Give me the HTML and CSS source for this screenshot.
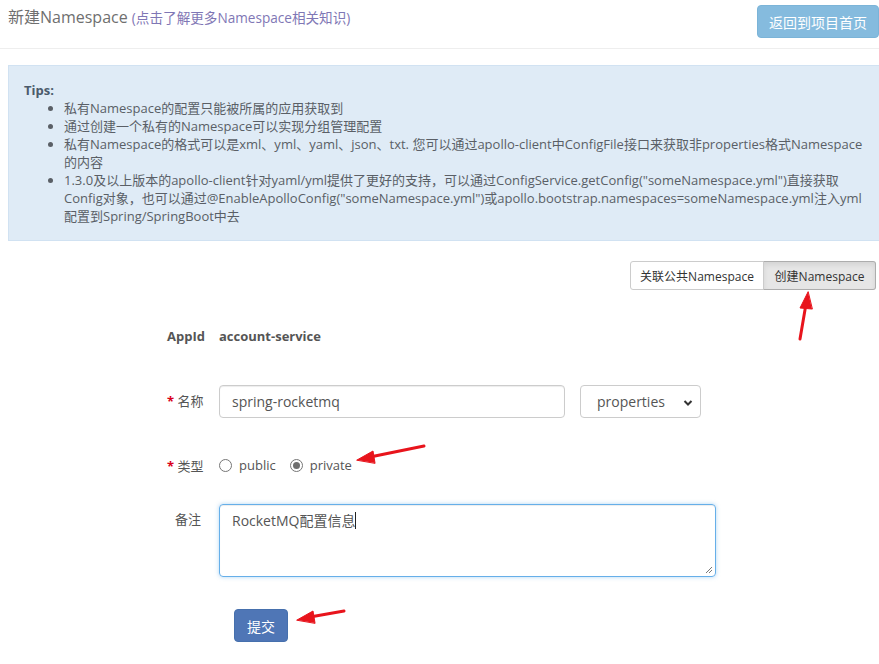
FILE: index.html
```html
<!DOCTYPE html>
<html lang="zh">
<head>
<meta charset="utf-8">
<title>新建Namespace</title>
<link rel="stylesheet" href="styles.css">
</head>
<body>
<div class="page">
  <header class="header">
    <h1 class="title">新建Namespace <a class="help" href="#">(点击了解更多Namespace相关知识)</a></h1>
    <button class="btn-back" type="button">返回到项目首页</button>
  </header>

  <div class="alert">
    <div class="tips-title">Tips:</div>
    <ul class="tips">
      <li>私有Namespace的配置只能被所属的应用获取到</li>
      <li>通过创建一个私有的Namespace可以实现分组管理配置</li>
      <li>私有Namespace的格式可以是xml、yml、yaml、json、txt. 您可以通过apollo-client中ConfigFile接口来获取非properties格式Namespace的内容</li>
      <li>1.3.0及以上版本的apollo-client针对yaml/yml提供了更好的支持，可以通过ConfigService.getConfig("someNamespace.yml")直接获取Config对象，也可以通过@EnableApolloConfig("someNamespace.yml")或apollo.bootstrap.namespaces=someNamespace.yml注入yml配置到Spring/SpringBoot中去</li>
    </ul>
  </div>

  <div class="segment-bar">
    <div class="segment">
      <button class="seg-btn" type="button">关联公共Namespace</button>
      <button class="seg-btn active" type="button">创建Namespace</button>
    </div>
  </div>

  <form class="form">
    <div class="row row-appid">
      <label class="label bold">AppId</label>
      <div class="value bold">account-service</div>
    </div>
    <div class="row row-name">
      <label class="label"><span class="req">*</span> 名称</label>
      <div class="value inline">
        <input class="input" type="text" value="spring-rocketmq">
        <div class="select">properties
          <svg class="chev" width="10" height="8" viewBox="0 0 10 8"><path d="M1.5 2 L5 5.5 L8.5 2" fill="none" stroke="#333" stroke-width="2"/></svg>
        </div>
      </div>
    </div>
    <div class="row row-type">
      <label class="label"><span class="req">*</span> 类型</label>
      <div class="value inline radios">
        <span class="radio"><span class="dot"></span>public</span>
        <span class="radio checked"><span class="dot"></span>private</span>
      </div>
    </div>
    <div class="row row-remark">
      <label class="label top">备注</label>
      <div class="value">
        <div class="textarea">RocketMQ配置信息<span class="caret"></span>
          <svg class="grip" width="9" height="9" viewBox="0 0 9 9"><path d="M8 2 L2 8 M8 5 L5 8" stroke="#777" stroke-width="1"/></svg>
        </div>
      </div>
    </div>
    <div class="row row-submit">
      <div class="label"></div>
      <div class="value"><button class="btn-submit" type="button">提交</button></div>
    </div>
  </form>

  <svg class="arrows" width="879" height="664" viewBox="0 0 879 664">
    <g fill="#e8141c" stroke="#e8141c" stroke-linecap="round">
      <path d="M800 339 L806 304" stroke-width="3" fill="none"/>
      <path d="M808 292 L800 308 L812 309 Z" stroke-width="1"/>
      <path d="M424 446 L370 457" stroke-width="3" fill="none"/>
      <path d="M357 460 L373 451 L375 463 Z" stroke-width="1"/>
      <path d="M344 611 L310 617" stroke-width="3" fill="none"/>
      <path d="M297 620 L313 611 L315 623 Z" stroke-width="1"/>
    </g>
  </svg>
</div>
</body>
</html>
```

FILE: styles.css
```css
* { box-sizing: border-box; }
html, body { margin: 0; padding: 0; background: #fff; }
body {
  font-family: "Open Sans", "Noto Sans CJK SC", sans-serif;
  font-size: 13px;
  color: #555;
  width: 879px;
  height: 664px;
  overflow: hidden;
}
.page { position: relative; width: 879px; height: 664px; }

.header {
  height: 49px;
  border-bottom: 1px solid #eee;
  display: flex;
  justify-content: space-between;
  align-items: flex-start;
  padding-left: 8px;
}
.title {
  margin: 6px 0 0;
  font-size: 16px;
  font-weight: 400;
  color: #6f6f6f;
  line-height: 22px;
}
.help {
  font-size: 13.6px;
  color: #7f77b5;
  text-decoration: none;
}
.btn-back {
  margin-top: 5px;
  width: 122px;
  height: 33px;
  border: 1px solid #7bb4d8;
  border-radius: 4px;
  background: #85bbde;
  color: #fff;
  font-family: "Open Sans", "Noto Sans CJK SC", sans-serif;
  font-size: 14px;
  padding: 0;
}

.alert {
  margin: 16px 0 0 8px;
  height: 176px;
  background: #dfebf6;
  border: 1px solid #d1e2f2;
  border-right: 0;
  padding: 15px 15px 0 15px;
  line-height: 18px;
  color: #5a5f66;
}
.tips-title {
  font-weight: 700;
  color: #4b5a6b;
}
.tips {
  margin: 0;
  padding-left: 40px;
}
.tips li { margin: 0; }

.segment-bar {
  display: flex;
  justify-content: flex-end;
  margin-top: 20px;
  padding-right: 3px;
}
.segment { display: flex; }
.seg-btn {
  height: 29px;
  border: 1px solid #ccc;
  background: #fff;
  font-family: "Open Sans", "Noto Sans CJK SC", sans-serif;
  font-size: 12px;
  color: #333;
  padding: 0 9px;
}
.seg-btn:first-child { border-radius: 3px 0 0 3px; width: 134px; }
.seg-btn.active {
  background: #e6e6e6;
  border-color: #adadad;
  border-left-color: #ccc;
  border-radius: 0 3px 3px 0;
  margin-left: -1px;
  width: 113px;
  box-shadow: inset 0 3px 5px rgba(0,0,0,0.08);
}

.form { display: flex; flex-direction: column; }
.row { display: flex; align-items: center; }
.label {
  width: 204px;
  flex: none;
  padding-left: 167px;
  margin-right: 15px;
  white-space: nowrap;
  color: #555;
  font-size: 13px;
}
.row-remark .label { padding-left: 175px; }
.bold { font-weight: 700; }
.req { color: #d9001b; font-weight: 700; }
.row-appid { margin-top: 29px; height: 34px; }
.row-name { margin-top: 32px; height: 33px; }
.row-name .label { padding-bottom: 3px; }
.row-type { margin-top: 30px; height: 34px; }
.row-remark { margin-top: 22px; align-items: flex-start; }
.row-remark .label { padding-top: 5px; }
.row-submit { margin-top: 32px; }

.inline { display: flex; align-items: center; }
.input {
  width: 346px;
  height: 33px;
  border: 1px solid #ccc;
  border-radius: 4px;
  padding: 0 12px;
  font-family: "Open Sans", "Noto Sans CJK SC", sans-serif;
  font-size: 14px;
  color: #555;
  box-shadow: inset 0 1px 1px rgba(0,0,0,0.075);
}
.select {
  margin-left: 15px;
  width: 121px;
  height: 33px;
  border: 1px solid #ccc;
  border-radius: 4px;
  font-size: 14px;
  color: #555;
  display: flex;
  align-items: center;
  padding-left: 16px;
  position: relative;
}
.chev { position: absolute; right: 7px; top: 13px; }

.radios { gap: 0; }
.radio {
  display: inline-flex;
  align-items: center;
  font-size: 13px;
  color: #555;
  margin-right: 14px;
}
.dot {
  width: 13px;
  height: 13px;
  border: 1px solid #767676;
  border-radius: 50%;
  margin-right: 7px;
  background: #fff;
  position: relative;
}
.checked .dot::after {
  content: "";
  position: absolute;
  left: 2px; top: 2px;
  width: 7px; height: 7px;
  border-radius: 50%;
  background: #6f6f6f;
}

.textarea {
  position: relative;
  width: 497px;
  height: 73px;
  border: 1px solid #66afe9;
  border-radius: 4px;
  box-shadow: inset 0 1px 1px rgba(0,0,0,0.075), 0 0 4px rgba(102,175,233,0.5);
  padding: 6px 12px;
  font-size: 14px;
  line-height: 20px;
  color: #555;
}
.caret {
  display: inline-block;
  width: 1px;
  height: 17px;
  background: #222;
  vertical-align: -3px;
}
.grip { position: absolute; right: 2px; bottom: 2px; }

.btn-submit {
  margin-left: 15px;
  width: 54px;
  height: 33px;
  border: 1px solid #4670ad;
  border-radius: 4px;
  background: #4f76b6;
  color: #fff;
  font-family: "Open Sans", "Noto Sans CJK SC", sans-serif;
  font-size: 14px;
  padding: 0;
}

.arrows {
  position: absolute;
  left: 0; top: 0;
  pointer-events: none;
}
```
